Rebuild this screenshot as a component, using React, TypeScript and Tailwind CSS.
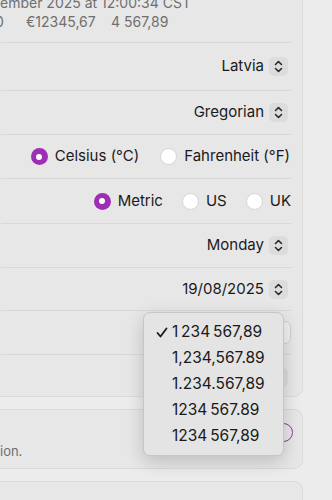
import { ReactNode } from 'react';

const Stepper = () => (
  <div className="w-[19px] h-[19px] rounded-[5px] bg-[#dcdcdc] flex items-center justify-center">
    <svg width="9" height="13" viewBox="0 0 9 13" fill="none" stroke="#2a2a2a" strokeWidth="1.6" strokeLinecap="round" strokeLinejoin="round">
      <path d="M1.5 4.5 L4.5 1.5 L7.5 4.5" />
      <path d="M1.5 8.5 L4.5 11.5 L7.5 8.5" />
    </svg>
  </div>
);

const Radio = ({ checked }: { checked?: boolean }) =>
  checked ? (
    <div className="w-[17px] h-[17px] rounded-full bg-[#9c2fb2] flex items-center justify-center">
      <div className="w-[6px] h-[6px] rounded-full bg-white" />
    </div>
  ) : (
    <div className="w-[17px] h-[17px] rounded-full bg-white border border-[#d4d4d4]" />
  );

const Row = ({ children, h = 'h-[44px]', pr = 'pr-[3px]' }: { children: ReactNode; h?: string; pr?: string }) => (
  <div className={`${h} ${pr} mr-[11px] border-b border-[#d8d8d8] flex items-center justify-end`}>
    {children}
  </div>
);

export default function App() {
  const formats = ['1\u2009234\u2009567,89', '1,234,567.89', '1.234.567,89', '1234\u2009567.89', '1234\u2009567,89'];

  return (
    <div
      className="relative w-[332px] h-[500px] overflow-hidden bg-[#ececec] text-[#1a1a1a]"
      style={{ fontFamily: 'Inter, "Noto Sans", sans-serif' }}
    >
      {/* main group box */}
      <div className="absolute left-[-16px] top-[-30px] w-[319px] h-[427px] rounded-[9px] border border-[#dadada] bg-[#e7e7e7] pl-4">
        <div className="pt-[23px] pb-[11px] mr-[11px] border-b border-[#d8d8d8] text-[14px] leading-[18px] text-[#6f6f6f]">
          <div className="-ml-[1px]">ember 2025 at 12:00:34 CST</div>
          <div className="flex -ml-[6px] mt-[1px]">
            <span className="w-[31px]">0</span>
            <span className="w-[85px]">€12345,67</span>
            <span>4 567,89</span>
          </div>
        </div>

        <Row h="h-[48px]">
          <span className="text-[15px] mr-[5px]">Latvia</span>
          <Stepper />
        </Row>
        <Row>
          <span className="text-[15px] mr-[5px]">Gregorian</span>
          <Stepper />
        </Row>
        <Row pr="pr-[1px]">
          <div className="flex items-center text-[15px]">
            <Radio checked />
            <span className="ml-[7px]">Celsius (°C)</span>
            <span className="ml-[21px]"><Radio /></span>
            <span className="ml-[7px]">Fahrenheit (°F)</span>
          </div>
        </Row>
        <Row h="h-[45px]" pr="pr-[0px]">
          <div className="flex items-center text-[15px]">
            <Radio checked />
            <span className="ml-[7px]">Metric</span>
            <span className="ml-[19px]"><Radio /></span>
            <span className="ml-[7px]">US</span>
            <span className="ml-[19px]"><Radio /></span>
            <span className="ml-[7px]">UK</span>
          </div>
        </Row>
        <Row>
          <span className="text-[15px] mr-[5px]">Monday</span>
          <Stepper />
        </Row>
        <Row h="h-[43px]">
          <span className="text-[15px] mr-[5px]">19/08/2025</span>
          <Stepper />
        </Row>
        <Row>
          <div className="h-[23px] w-[110px] -mr-[3px] rounded-[6px] bg-[#f1f1f1] border border-[#d0d0d0]" />
        </Row>
        <div className="h-[44px] mr-[11px] flex items-center justify-end pr-[3px]">
          <Stepper />
        </div>
      </div>

      {/* second group box */}
      <div className="absolute left-[-16px] top-[409px] w-[319px] h-[60px] rounded-[9px] border border-[#dadada] bg-[#e7e7e7] pl-4">
        <div className="absolute left-[15px] top-[33px] text-[13px] leading-[16px] text-[#6f6f6f]">ion.</div>
        <div className="absolute left-[289px] top-[13px] w-[19px] h-[19px] rounded-full border-[1.5px] border-[#9c2fb2]" />
      </div>

      {/* third group box */}
      <div className="absolute left-[-16px] top-[481px] w-[319px] h-[60px] rounded-[9px] border border-[#dadada] bg-[#e7e7e7]" />

      {/* popup menu */}
      <div className="absolute left-[143px] top-[312px] w-[141px] h-[144px] rounded-[7px] border border-[#c6c6c6] bg-[#e4e4e4] shadow-[0_6px_18px_rgba(0,0,0,0.18)] py-[6px]">
        {formats.map((f, i) => (
          <div key={f} className="h-[26px] flex items-center text-[15.5px] text-[#1a1a1a]">
            <span className="w-[28px] flex justify-end pr-[4px]">
              {i === 0 && (
                <svg width="12" height="11" viewBox="0 0 12 11" fill="none" stroke="#1a1a1a" strokeWidth="1.8" strokeLinecap="round" strokeLinejoin="round">
                  <path d="M1.5 6 L4.5 9.5 L10.5 1.5" />
                </svg>
              )}
            </span>
            <span>{f}</span>
          </div>
        ))}
      </div>
    </div>
  );
}
